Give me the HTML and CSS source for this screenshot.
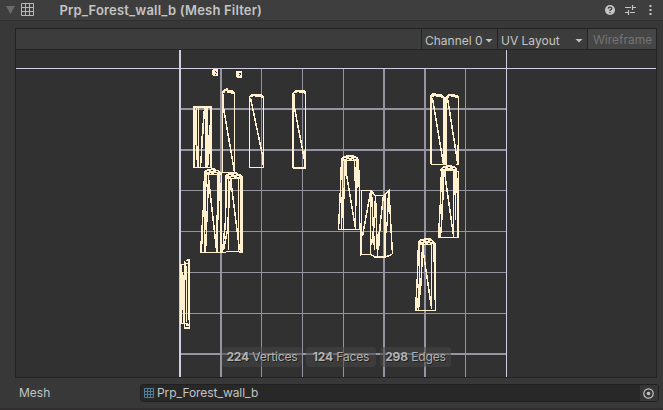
FILE: index.html
```html
<!DOCTYPE html>
<html lang="en">
<head>
<meta charset="utf-8">
<title>Mesh Filter</title>
<link rel="stylesheet" href="styles.css">
</head>
<body>
<div class="inspector">
  <header class="header">
    <svg class="fold" width="9" height="8" viewBox="0 0 9 8"><path d="M0 0h9L4.500 8z" fill="#6b6b6b"/></svg>
    <svg class="mesh-icon" width="13" height="13" viewBox="0 0 13 13"><path d="M.5.5h12v12H.5zM4.500 0v13M8.500 0v13M0 4.500h13M0 8.500h13" fill="none" stroke="#83c9ee"/></svg>
    <h1 class="title">Prp_Forest_wall_b (Mesh Filter)</h1>
    <div class="actions">
      <svg width="10" height="10" viewBox="0 0 10 10"><circle cx="5" cy="5" r="5" fill="#c6c6c6"/><path d="M3.200 3.700Q3.300 2.200 5 2.200Q6.800 2.200 6.800 3.600Q6.800 4.400 5 5.100V6M5 7v1.200" fill="none" stroke="#3e3e3e" stroke-width="1.300"/></svg>
      <svg width="11" height="10" viewBox="0 0 11 10"><path d="M0 2.500h6M8 2.500h3M7.500 0v5M0 7.500h3M5 7.500h5M3.500 5v5" fill="none" stroke="#c6c6c6" stroke-width="1.200"/></svg>
      <svg width="3" height="10" viewBox="0 0 3 10"><path d="M.5 0h2v2h-2zM.5 4h2v2h-2zM.5 8h2v2h-2z" fill="#c6c6c6"/></svg>
    </div>
  </header>
  <main class="preview">
    <div class="toolbar">
      <div class="tool channel"><span>Channel 0</span><i class="caret"></i></div>
      <div class="tool layout"><span>UV Layout</span><i class="caret"></i></div>
      <div class="tool wire"><span>Wireframe</span></div>
    </div>
    <div class="canvas">
      <svg class="uv" width="640" height="327" viewBox="16 50 640 327" shape-rendering="crispEdges">
        <g fill="#9693a3">
          <path d="M220 69h2v308h-2zM261 69h1v308h-1zM302 69h1v308h-1zM343 69h1v308h-1zM383 69h2v308h-2zM424 69h2v308h-2zM465 69h1v308h-1z"/>
          <path d="M181 108h325v2H181zM181 149h325v2H181zM181 190h325v1H181zM181 231h325v1H181zM181 272h325v1H181zM181 313h325v1H181zM181 353h325v2H181z"/>
        </g>
        <path d="M179 50h2v327h-2zM506 50h1v327h-1zM16 68h640v1H16z" fill="#d0cde0"/>
        <path d="M213 69h5v7h-5v-1h-1v-5h1zM237 71h5v7h-5v-1h-1v-6z" fill="#fff1cf"/>
        <path d="M215 71h1v1h-1zM216 72h1v1h-1zM215 74h1v1h-1zM239 73h2v1h-2zM240 74h1v1h-1zM239 75h1v1h-1z" fill="#313131"/>
        <g fill="none" stroke="#fff1cf" stroke-width="1.500">
          <path d="M194 107H211V167.500H194zM193.500 107V168M193 106.500H211M195.500 110L197.500 167M198.500 108V168M196.500 108L195.500 145M200.500 167L204.500 108M201.500 145L203.500 120M205.500 107V167M206.500 107V167M207.500 107V167M209.500 125L208.500 165M210.500 107V167"/>
          <path d="M222.500 92V173M234.500 92V173M223.500 94V108L234.500 172"/>
          <path d="M249.500 96V167.500H263.500V96M250.500 98L263.500 160M263.500 145V167M262.500 155V165"/>
          <path d="M293.500 92V168H305.500V92M292.500 93V168M294.500 94V108L304.500 160M304.500 150V167"/>
          <path d="M204.500 173L203.500 206 200.500 252.500H221.500V172M205.500 173L204.500 252M206.500 173V180L202.500 220 201.500 252M208.500 173V178L207.500 205 205.500 252M208.500 178L216.500 250M217.500 172V252M219.500 173L220.500 210V252M216.500 215V252M218.500 175V220"/>
          <path d="M226.500 176L225.500 220 222.500 252M228.500 178V250M226 251.500H242.500V176M225.500 177V230M230.500 177L227.500 230 223.500 250M231.500 177V186L239.500 250M240.500 178V252M241.500 176V252M238.500 178V252M222 252.500h4M239 252.500h4M221 172.500h14"/>
          <path d="M180.500 264V323.500H184M180 264.500h6M181.500 264V323M184.500 261V328M189.500 261V328M185.500 260.500h4M186.500 259.500h3M185.500 262V280M186.500 266V322M188.500 259V320M184 328h6M182.500 272V310L184 290M183.500 275V323M181 323.500h7M185 263.500h4M186 325h3"/>
          <path d="M341.500 160L340.500 188 338.500 229.500H361M342.500 160V186L341.500 229M345.500 160L343.500 205V229M345.500 168L355.500 228M346.500 157V173M354.500 159L355.500 188V229M356.500 158V206M358.500 160L359.500 195V229M344.500 158V170M357.500 160V188"/>
          <path d="M361.500 190V255M360.500 223V255.500M361 190.500H371L375 195.500H384L389 190.500 391.500 238 392.500 254M361 254.500H371L375 257H385L392 254.500M362.500 236L370.500 192M370.500 190V255M371.500 192L374.500 250M375.500 195L374.500 222 371.500 245M377.500 248L383.500 195M378.500 250L380.500 220M384.500 195V257M385.500 195V257M375.500 195L377.500 256M388.500 191L387.500 220 385.500 235M375 256.500h9"/>
          <path d="M431.500 95V164.500H443.500V96M430.500 95V164M432.500 98L443.500 164M444.500 97V165"/>
          <path d="M446.500 96V165M445.500 97V165M458.500 96V164.500H456M447.500 98L457.500 162M457.500 145V165"/>
          <path d="M441.500 170L440.500 200 438.500 237.500H458.500V171M443.500 171L442.500 210 440.500 237M444.500 172L453.500 236M445.500 172V185M442.500 170V208M453.500 171V237M454.500 171V195M456.500 170L457.500 200V237M455.500 170V220M439.500 205V237M443.500 177L441.500 220"/>
          <path d="M418.500 243L417.500 275 415.500 310.500H435.500V243M419.500 243V281L417.500 308M422.500 245L421.500 275 418.500 310M423.500 244V253L431.500 308M431.500 244V309M433.500 244L435.500 290M434.500 243V300M416.500 280V310M421.500 258V284L418.500 292"/>
        </g>
        <g fill="#fff1cf">
          <path d="M222 91L224 89H226V88H228V90H232L235 92V94H231V93H227V91H225V93H222z"/>
          <path d="M249 96L251 94H261L263 96V98H261V97H255V96H253V97H249z"/>
          <path d="M293 92L295 90H304L306 92V94H304V93H299V92H297V93H293z"/>
          <path d="M430 95L433 93H436V94H441L444 96V98H441V97H436V96H434V97H430z"/>
          <path d="M445 97L449 94H455V95H458V98H455V97H451V96H449V98H445z"/>
          <path d="M204 174V171L208 169H211V168H215V169L220 171 222 174V175H204z"/>
          <path d="M225 178V175L229 173H231V172H237V173L242 175 243 178H240V179H228z"/>
          <path d="M341 160V158L343 156H346V155H354V156L358 157 359 161H343z"/>
          <path d="M440 171V169L443 166H446V165H452V166H455L457 169 458 172H454L452 171H446V172z"/>
          <path d="M418 245V242L420 239H424V238H431V239L434 241 436 244H432V245z"/>
        </g>
        <path d="M207 171h2v1h-2zM211 170h2v1h-2zM216 171h2v1h-2zM210 173h1v1h-1zM214 173h3v1h-3zM229 175h2v1h-2zM234 174h2v1h-2zM237 176h2v1h-2zM231 177h3v1h-3zM344 158h2v1h-2zM349 157h2v1h-2zM354 158h2v1h-2zM347 159h2v1h-2zM352 159h1v1h-1zM443 168h2v1h-2zM448 167h2v1h-2zM453 168h2v1h-2zM421 241h2v1h-2zM426 240h2v1h-2zM430 241h2v1h-2zM424 243h1v1h-1zM428 243h2v1h-2z" fill="#313131"/>
      </svg>
      <div class="stats">
        <div class="badge vertices"><b>224</b> <span>Vertices</span></div>
        <div class="badge faces"><b>124</b> <span>Faces</span></div>
        <div class="badge edges"><b>298</b> <span>Edges</span></div>
      </div>
    </div>
  </main>
  <div class="field">
    <label class="label">Mesh</label>
    <div class="object">
      <svg width="11" height="11" viewBox="0 0 11 11"><path d="M.5.5h9v9h-9zM3.500 0v10M6.500 0v10M0 3.500h10M0 6.500h10" fill="none" stroke="#4d8098"/></svg>
      <span class="name">Prp_Forest_wall_b</span>
      <span class="picker"><svg width="11" height="11" viewBox="0 0 11 11"><circle cx="5.500" cy="5.500" r="4.700" fill="none" stroke="#c4c4c4" stroke-width="1.200"/><circle cx="5.500" cy="5.500" r="1.800" fill="#c4c4c4"/></svg></span>
    </div>
  </div>
</div>
</body>
</html>
```
FILE: styles.css
```css
* { box-sizing: border-box; }
body {
  margin: 0;
  background: #383838;
  color: #c4c4c4;
  font: 12px/16px Inter, "Liberation Sans", sans-serif;
  white-space: nowrap;
}
svg { display: block; flex: none; }
.inspector { width: 663px; height: 410px; overflow: hidden; border-bottom: 2px solid #302e2f; }
.header {
  display: flex;
  align-items: center;
  height: 21px;
  padding: 0 6px;
  background: #3e3e3e;
  border-bottom: 1px solid #303030;
}
.mesh-icon { margin: -1px 0 0 6px; }
.title { margin: 0 0 0 25.5px; font-size: 13px; font-weight: 600; letter-spacing: .18px; }
.actions { display: flex; gap: 10px; align-items: center; margin-left: auto; padding-right: 5px; }
.actions svg:last-child { margin-left: 3px; }
.preview {
  width: 642px;
  height: 350px;
  margin: 7px 0 0 15px;
  border: 1px solid #232323;
  background: #313131;
}
.toolbar {
  display: flex;
  justify-content: flex-end;
  height: 21px;
  background: #3c3c3c;
  border-bottom: 1px solid #232323;
}
.tool {
  display: flex;
  align-items: center;
  justify-content: space-between;
  border-left: 1px solid #232323;
  padding: 3px 4px 0 3px;
}
.channel { width: 76px; }
.layout { width: 90px; }
.wire { width: 69px; background: #464646; color: #747474; padding: 2px 4px 0 5px; }
.caret {
  width: 8px;
  height: 4px;
  background: #c4c4c4;
  clip-path: polygon(0 0, 100% 0, 50% 100%);
}
.canvas { display: grid; height: 327px; }
.canvas > * { grid-area: 1 / 1; }
.stats { display: flex; align-items: flex-start; align-self: end; padding: 0 0 10px 206px; }
.badge {
  height: 20px;
  border-radius: 3px;
  background: rgba(70, 70, 70, .55);
  color: #b2b2b2;
  line-height: 20px;
  text-shadow: 1px 1px 0 #202020;
  text-align: center;
}
.badge b { font-weight: 700; letter-spacing: -.2px; }
.badge span { letter-spacing: -.15px; }
.vertices { width: 80px; margin-right: 4px; }
.faces { width: 70px; margin-right: 4px; }
.edges { width: 71px; }
.field { display: flex; align-items: center; height: 18px; margin: 6px 4px 0 19px; }
.label { width: 121px; }
.object {
  display: flex;
  align-items: center;
  flex: 1;
  height: 18px;
  padding-left: 3px;
  background: #282828;
  border: 1px solid #202020;
  border-radius: 3px;
}
.name { margin-left: 2px; letter-spacing: -.05px; }
.picker {
  display: grid;
  place-items: center;
  width: 18px;
  height: 16px;
  padding-right: 1px;
  margin-left: auto;
  background: #363636;
}
```
